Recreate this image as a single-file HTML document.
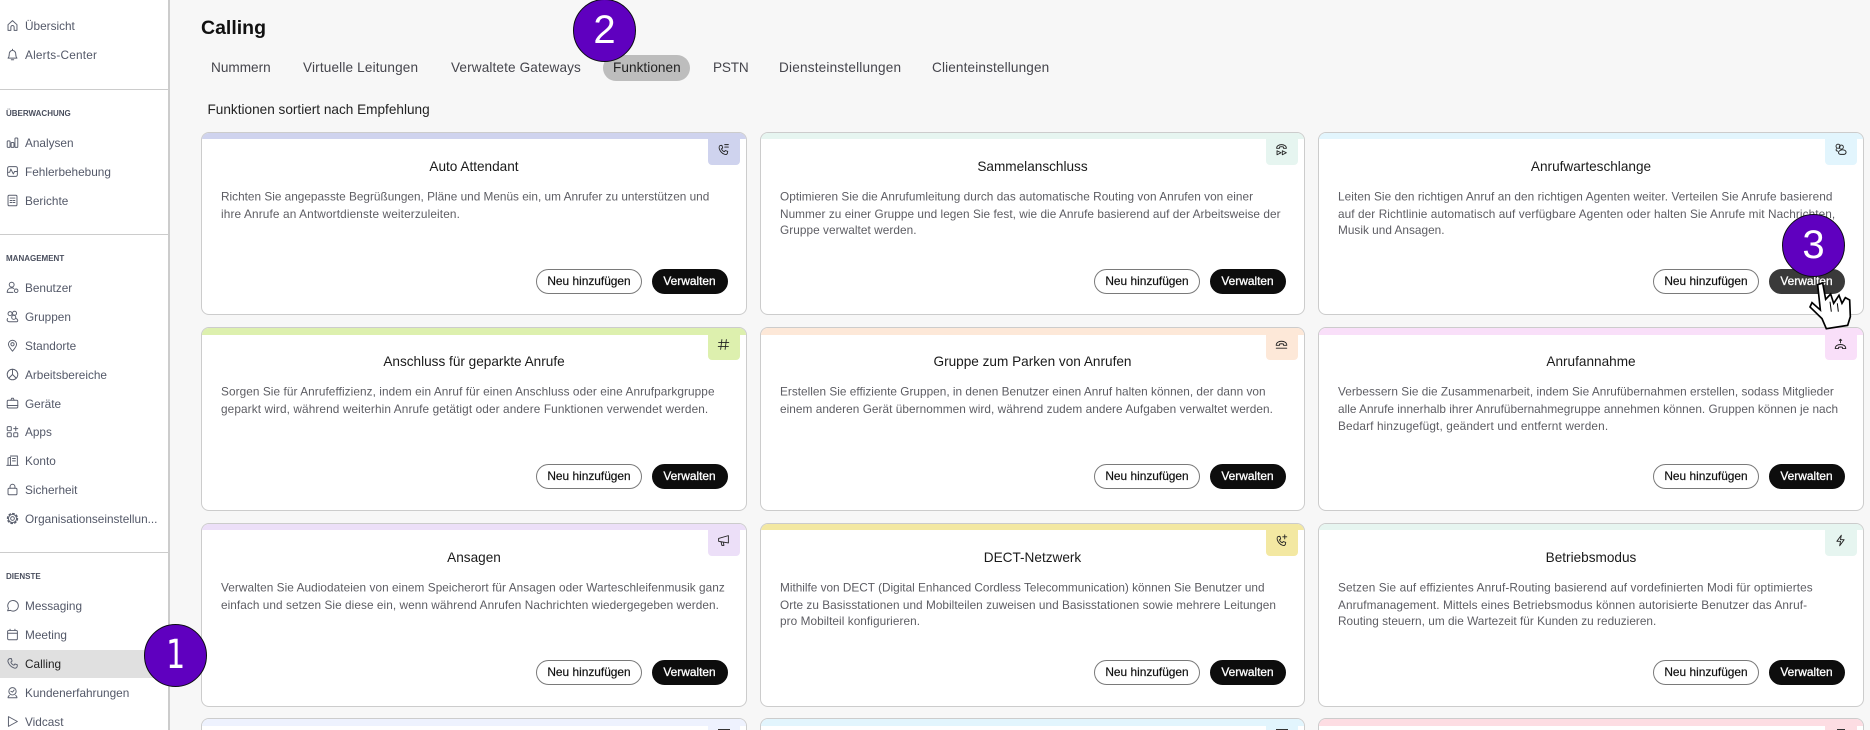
<!DOCTYPE html>
<html lang="de">
<head>
<meta charset="utf-8">
<title>Calling</title>
<style>
html,body{margin:0;padding:0;width:1870px;height:730px;overflow:hidden;background:#f7f7f7;font-family:"Liberation Sans",sans-serif;color:#222}
*{box-sizing:border-box}
#root{position:relative;width:1870px;height:730px;overflow:hidden;background:#f7f7f7}
#side{position:absolute;left:0;top:0;width:170px;height:730px;background:#fff;border-right:2px solid #ccc;overflow:hidden}
.hr{position:absolute;left:0;width:168px;height:1.5px;background:#ccc}
.sec{position:absolute;left:6px;font-size:8px;font-weight:bold;color:#4a4f5e;line-height:10px;height:10px;white-space:nowrap}
.nav{position:absolute;left:0;width:168px;height:28px;line-height:28px;font-size:11.8px;color:#535868;padding-left:25px;white-space:nowrap;overflow:hidden}
.nav svg{position:absolute;left:6px;top:7px;width:13px;height:13px;fill:none;stroke:#5a5f6e;stroke-width:1.2;stroke-linecap:round;stroke-linejoin:round}
.nav.on{background:#e0e0e0;color:#222}
h1{position:absolute;left:201px;top:16px;margin:0;font-size:19.5px;line-height:24px;font-weight:bold;color:#111}
.tab{position:absolute;top:58px;height:20px;line-height:20px;font-size:13.6px;color:#45454c;white-space:nowrap}
#pill{position:absolute;left:603px;top:55px;width:87px;height:26px;border-radius:13px;background:#bdbdbd}
#sort{position:absolute;left:207.5px;top:100px;font-size:13.6px;line-height:20px;color:#222;white-space:nowrap}
.card{position:absolute;background:#fff;border:1.5px solid #ccc;border-radius:8px;overflow:hidden}
.c1{left:201px;width:546px}.c2{left:760px;width:545px}.c3{left:1318px;width:546px}
.r1{top:132px;height:183px}.r2{top:327px;height:184px}.r3{top:523px;height:184px}
.r4{top:718px;height:12px;border-bottom:0;border-radius:8px 8px 0 0}
.band{position:absolute;left:0;top:0;width:100%;height:6px}
.r2 .band,.r4 .band{height:6.5px}
.itab{position:absolute;right:6.5px;top:0;width:32px;height:31.5px;border-radius:0 0 4px 4px}
.r4 .itab{height:10.5px;border-radius:0}
.itab svg{position:absolute;left:9.5px;top:10px;width:13px;height:13px;fill:none;stroke:#222;stroke-width:1.1;stroke-linecap:round;stroke-linejoin:round}
.t{position:absolute;left:0;right:0;top:23.5px;height:20px;line-height:20px;text-align:center;font-size:13.6px;color:#1a1a1a;white-space:nowrap}
svg.d{position:absolute;left:19px;top:54.5px;width:520px;height:56px;overflow:visible;font-family:"Liberation Sans",sans-serif;font-size:11.8px;fill:#5d5d63}
.b1,.b2{position:absolute;top:135.5px;height:25.5px;line-height:23.5px;border-radius:13px;font-size:11.9px;text-align:center;white-space:nowrap}
.b1{right:104px;width:106px;background:#fff;border:1px solid #7a7a7a;color:#111;-webkit-text-stroke:.2px #111}
.b2{right:18.5px;width:76px;background:#0d0d0d;border:1px solid #0d0d0d;color:#fff;-webkit-text-stroke:.3px #fff}
.num{position:absolute;width:63px;height:63px;border-radius:50%;background:#5f00bf;border:1.5px solid #0c0c14;color:#fff;font-size:40px;line-height:60px;text-align:center;font-family:"Liberation Sans",sans-serif}
.num span{display:inline-block}
.num .one{font-family:"DejaVu Sans",sans-serif;transform:scaleX(.75)}
#hand{position:absolute;left:1770px;top:210px;width:100px;height:130px}
</style>
</head>
<body>
<div id="root">
<div id="side">
  <div class="nav" style="top:12px"><svg viewBox="0 0 16 16"><path d="M2.5 7 8 2l5.5 5v7H10v-4a2 2 0 0 0-4 0v4H2.5z"/></svg>Übersicht</div>
  <div class="nav" style="top:41px;letter-spacing:.2px"><svg viewBox="0 0 16 16"><path d="M2.5 12.5h11c-1.300-1.500-1.500-3-1.500-5 0-2.500-1.700-4.500-4-4.500s-4 2-4 4.500c0 2-.2 3.500-1.500 5zM8 1.500V3M6.500 14.500h3"/></svg>Alerts-Center</div>
  <div class="hr" style="top:88.5px"></div>
  <div class="sec" style="top:109px">ÜBERWACHUNG</div>
  <div class="nav" style="top:129px"><svg viewBox="0 0 16 16"><rect x="1.500" y="6" width="3.500" height="8" rx="1"/><rect x="6.300" y="8" width="3.500" height="6" rx="1"/><rect x="11" y="2.500" width="3.500" height="11.500" rx="1"/></svg>Analysen</div>
  <div class="nav" style="top:158px"><svg viewBox="0 0 16 16"><rect x="2" y="2" width="12" height="12" rx="2"/><path d="M2 9h2.500L6 5l3 6 1.500-3H14"/></svg>Fehlerbehebung</div>
  <div class="nav" style="top:187px"><svg viewBox="0 0 16 16"><rect x="2.500" y="1.500" width="11" height="13" rx="1.500"/><path d="M5 8h2.500M9 8h2M5 10.500h2.500M9 10.500h2M5 5h6"/></svg>Berichte</div>
  <div class="hr" style="top:233.5px"></div>
  <div class="sec" style="top:254px">MANAGEMENT</div>
  <div class="nav" style="top:274px"><svg viewBox="0 0 16 16"><circle cx="7" cy="4.500" r="3"/><path d="M1.500 14c0-3.500 2.300-5.500 5.500-5.500 1 0 2 .2 2.700.7M1.500 14h7"/><circle cx="12.500" cy="12" r="2.200"/></svg>Benutzer</div>
  <div class="nav" style="top:303px"><svg viewBox="0 0 16 16"><circle cx="5" cy="4.500" r="2.500"/><circle cx="10.500" cy="4" r="2.500"/><circle cx="9.500" cy="9" r="2.500"/><path d="M2 10.500c-1.500 2 0 4 2 4h9c2 0 2-3-.5-4"/></svg>Gruppen</div>
  <div class="nav" style="top:332px"><svg viewBox="0 0 16 16"><path d="M8 15C5 11.500 3 9 3 6.500a5 5 0 0 1 10 0C13 9 11 11.500 8 15z"/><circle cx="8" cy="6.500" r="2"/></svg>Standorte</div>
  <div class="nav" style="top:361px"><svg viewBox="0 0 16 16"><circle cx="8" cy="8" r="6.500"/><path d="M8 1.500V8l-4.500 4.500M8 8l4.500 4.500"/></svg>Arbeitsbereiche</div>
  <div class="nav" style="top:390px"><svg viewBox="0 0 16 16"><rect x="1.500" y="4" width="13" height="9.500" rx="1.500"/><path d="M1.500 10.500h13M6 4l1-2.500h2L10 4"/></svg>Geräte</div>
  <div class="nav" style="top:418px"><svg viewBox="0 0 16 16"><rect x="1.500" y="2" width="5" height="5" rx="1"/><rect x="1.500" y="9.500" width="5" height="5" rx="1"/><rect x="9.500" y="9.500" width="5" height="5" rx="1"/><path d="M12 2v5M9.500 4.500h5"/></svg>Apps</div>
  <div class="nav" style="top:447px"><svg viewBox="0 0 16 16"><path d="M1 14h14M2.500 14V5l3-1v10M5.500 2.500H14V14M8 5.500h3.500M8 8.500h3.500"/></svg>Konto</div>
  <div class="nav" style="top:476px"><svg viewBox="0 0 16 16"><rect x="2.500" y="6.500" width="11" height="8" rx="1.500"/><path d="M5 6.500v-2a3 3 0 0 1 6 0v2"/></svg>Sicherheit</div>
  <div class="nav" style="top:505px"><svg viewBox="0 0 16 16"><circle cx="8" cy="8" r="2.300"/><circle cx="8" cy="8" r="5"/><circle cx="8" cy="8" r="6.200" stroke-dasharray="2 2.870" stroke-width="1.600"/></svg>Organisationseinstellun...</div>
  <div class="hr" style="top:551.5px"></div>
  <div class="sec" style="top:572px">DIENSTE</div>
  <div class="nav" style="top:592px"><svg viewBox="0 0 16 16"><path d="M2 14.500l1-3A6.500 6.500 0 1 1 5.500 14z"/></svg>Messaging</div>
  <div class="nav" style="top:621px"><svg viewBox="0 0 16 16"><rect x="2" y="3" width="12" height="11.500" rx="1.500"/><path d="M2 6.500h12M5 1.500V3M11 1.500V3"/></svg>Meeting</div>
  <div class="nav on" style="top:650px"><svg viewBox="0 0 16 16"><path d="M4.500 2l2-.2 1 3.200L6 6.300c.6 1.800 2 3.200 3.800 3.800L11 8.600l3 1-.3 2.200c-.3 1.500-2 2.300-3.500 1.800C6.500 12.400 3.700 9.600 2.500 6c-.5-1.600.4-3.600 2-4z"/></svg>Calling</div>
  <div class="nav" style="top:679px"><svg viewBox="0 0 16 16"><circle cx="8" cy="6.500" r="4.500"/><path d="M2.500 14.500h11M4 11.500c-1 1-1.500 2-1.500 3M12 11.500c1 1 1.500 2 1.500 3M6 6.500l2 1 2-2.500"/></svg>Kundenerfahrungen</div>
  <div class="nav" style="top:708px;height:22px"><svg viewBox="0 0 16 16"><path d="M3 2v12l11-6z"/></svg>Vidcast</div>
</div>

<h1>Calling</h1>
<div id="pill"></div>
<div class="tab" style="left:211px">Nummern</div>
<div class="tab" style="left:303px;letter-spacing:.15px">Virtuelle Leitungen</div>
<div class="tab" style="left:451px;letter-spacing:.12px">Verwaltete Gateways</div>
<div class="tab" style="left:613px;color:#222;letter-spacing:.05px">Funktionen</div>
<div class="tab" style="left:713px;letter-spacing:-.2px">PSTN</div>
<div class="tab" style="left:779px;letter-spacing:.19px">Diensteinstellungen</div>
<div class="tab" style="left:932px;letter-spacing:.13px">Clienteinstellungen</div>
<div id="sort">Funktionen sortiert nach Empfehlung</div>

<!-- Row 1 -->
<div class="card c1 r1"><div class="band" style="background:#cfd3ee"></div>
  <div class="itab" style="background:#cfd3ee"><svg viewBox="0 0 16 16"><path d="M4 3l2-.2L7 6 5.500 7.200c.6 1.700 1.800 2.900 3.500 3.500l1.200-1.400 3 1-.3 2c-.3 1.500-1.800 2.200-3.300 1.700C6.300 13 4 10.600 2.800 7 2.300 5.300 2.800 3.500 4 3zM9.500 2H14M9.500 5H14"/></svg></div>
  <div class="t">Auto Attendant</div>
  <svg class="d"><text y="12.500" textLength="488.300">Richten Sie angepasste Begrüßungen, Pläne und Menüs ein, um Anrufer zu unterstützen und</text><text y="30" textLength="238.900">ihre Anrufe an Antwortdienste weiterzuleiten.</text></svg>
  <div class="b1">Neu hinzufügen</div><div class="b2">Verwalten</div></div>

<div class="card c2 r1"><div class="band" style="background:#e6f5f0"></div>
  <div class="itab" style="background:#e6f5f0"><svg viewBox="0 0 16 16"><path d="M2 6.500c0-3 3-4.500 6-4.500s6 1.500 6 4.500h-3.500V5C9 4.500 7 4.500 5.500 5v1.500zM2.500 9.500v5l5-2.500zM9 9.500v5l5-2.500z"/></svg></div>
  <div class="t">Sammelanschluss</div>
  <svg class="d"><text y="12.500" textLength="473">Optimieren Sie die Anrufumleitung durch das automatische Routing von Anrufen von einer</text><text y="30" textLength="500.500">Nummer zu einer Gruppe und legen Sie fest, wie die Anrufe basierend auf der Arbeitsweise der</text><text y="46" textLength="136.500">Gruppe verwaltet werden.</text></svg>
  <div class="b1">Neu hinzufügen</div><div class="b2">Verwalten</div></div>

<div class="card c3 r1"><div class="band" style="background:#e2f5fd"></div>
  <div class="itab" style="background:#e2f5fd"><svg viewBox="0 0 16 16"><circle cx="5" cy="4" r="2.500"/><circle cx="9" cy="5" r="2.500"/><path d="M3 7c-1 2 0 3 1.500 3M7 9.500c-2 1-2 4.500 1 4.500h4c3 0 3.500-3 2-4.500-1.500-1.500-5.500-1.500-7 0z"/></svg></div>
  <div class="t">Anrufwarteschlange</div>
  <svg class="d"><text y="12.500" textLength="494.400">Leiten Sie den richtigen Anruf an den richtigen Agenten weiter. Verteilen Sie Anrufe basierend</text><text y="30" textLength="497.200">auf der Richtlinie automatisch auf verfügbare Agenten oder halten Sie Anrufe mit Nachrichten,</text><text y="46" textLength="106.500">Musik und Ansagen.</text></svg>
  <div class="b1">Neu hinzufügen</div><div class="b2" style="background:#3a3a3a;border-color:#3a3a3a">Verwalten</div></div>

<!-- Row 2 -->
<div class="card c1 r2"><div class="band" style="background:#ddf0ae"></div>
  <div class="itab" style="background:#ddf0ae"><svg viewBox="0 0 16 16"><path d="M6 2 4.500 14M11.500 2 10 14M2 5.500h12.500M1.500 10.500H14"/></svg></div>
  <div class="t">Anschluss für geparkte Anrufe</div>
  <svg class="d"><text y="12.500" textLength="493.500">Sorgen Sie für Anrufeffizienz, indem ein Anruf für einen Anschluss oder eine Anrufparkgruppe</text><text y="30" textLength="487.200">geparkt wird, während weiterhin Anrufe getätigt oder andere Funktionen verwendet werden.</text></svg>
  <div class="b1">Neu hinzufügen</div><div class="b2">Verwalten</div></div>

<div class="card c2 r2"><div class="band" style="background:#fde8d8"></div>
  <div class="itab" style="background:#fde8d8"><svg viewBox="0 0 16 16"><path d="M1.500 9c0-3.500 3-5 6.500-5s6.500 1.500 6.500 5h-4V7.500c-1.500-.5-3.500-.5-5 0V9zM1.500 12.500h13"/></svg></div>
  <div class="t">Gruppe zum Parken von Anrufen</div>
  <svg class="d"><text y="12.500" textLength="485.500">Erstellen Sie effiziente Gruppen, in denen Benutzer einen Anruf halten können, der dann von</text><text y="30" textLength="492.900">einem anderen Gerät übernommen wird, während zudem andere Aufgaben verwaltet werden.</text></svg>
  <div class="b1">Neu hinzufügen</div><div class="b2">Verwalten</div></div>

<div class="card c3 r2"><div class="band" style="background:#f9dff9"></div>
  <div class="itab" style="background:#f9dff9"><svg viewBox="0 0 16 16"><path d="M1.500 13c0-3.500 3-5 6.500-5s6.500 1.500 6.500 5h-4v-1.500c-1.500-.5-3.500-.5-5 0V13zM8 6V2M6.500 3 8 1.500 9.500 3"/></svg></div>
  <div class="t">Anrufannahme</div>
  <svg class="d"><text y="12.500" textLength="495.800">Verbessern Sie die Zusammenarbeit, indem Sie Anrufübernahmen erstellen, sodass Mitglieder</text><text y="30" textLength="500.100">alle Anrufe innerhalb ihrer Anrufübernahmegruppe annehmen können. Gruppen können je nach</text><text y="47" textLength="270.100">Bedarf hinzugefügt, geändert und entfernt werden.</text></svg>
  <div class="b1">Neu hinzufügen</div><div class="b2">Verwalten</div></div>

<!-- Row 3 -->
<div class="card c1 r3"><div class="band" style="background:#ecdff8"></div>
  <div class="itab" style="background:#ecdff8"><svg viewBox="0 0 16 16"><path d="M14 2v9L2 9V5.500zM5 10l1 4h2.500L8 10.500"/></svg></div>
  <div class="t">Ansagen</div>
  <svg class="d"><text y="12.500" textLength="503.800">Verwalten Sie Audiodateien von einem Speicherort für Ansagen oder Warteschleifenmusik ganz</text><text y="30" textLength="497.900">einfach und setzen Sie diese ein, wenn während Anrufen Nachrichten wiedergegeben werden.</text></svg>
  <div class="b1">Neu hinzufügen</div><div class="b2">Verwalten</div></div>

<div class="card c2 r3"><div class="band" style="background:#f3e8a2"></div>
  <div class="itab" style="background:#f3e8a2"><svg viewBox="0 0 16 16"><path d="M4 3l2-.2L7 6 5.500 7.200c.6 1.700 1.800 2.900 3.500 3.500l1.200-1.400 3 1-.3 2c-.3 1.500-1.800 2.200-3.300 1.700C6.300 13 4 10.600 2.800 7 2.300 5.300 2.800 3.500 4 3zM12 1v5M9.500 3.500h5"/></svg></div>
  <div class="t">DECT-Netzwerk</div>
  <svg class="d"><text y="12.500" textLength="484.500">Mithilfe von DECT (Digital Enhanced Cordless Telecommunication) können Sie Benutzer und</text><text y="30" textLength="495.900">Orte zu Basisstationen und Mobilteilen zuweisen und Basisstationen sowie mehrere Leitungen</text><text y="46" textLength="140">pro Mobilteil konfigurieren.</text></svg>
  <div class="b1">Neu hinzufügen</div><div class="b2">Verwalten</div></div>

<div class="card c3 r3"><div class="band" style="background:#e6f5f0"></div>
  <div class="itab" style="background:#e6f5f0"><svg viewBox="0 0 16 16"><path d="M9 1.500 3.500 9H8l-1 5.500L12.500 7H8z"/></svg></div>
  <div class="t">Betriebsmodus</div>
  <svg class="d"><text y="12.500" textLength="474.700">Setzen Sie auf effizientes Anruf-Routing basierend auf vordefinierten Modi für optimiertes</text><text y="30" textLength="469">Anrufmanagement. Mittels eines Betriebsmodus können autorisierte Benutzer das Anruf-</text><text y="46" textLength="318.300">Routing steuern, um die Wartezeit für Kunden zu reduzieren.</text></svg>
  <div class="b1">Neu hinzufügen</div><div class="b2">Verwalten</div></div>

<!-- Row 4 -->
<div class="card c1 r4"><div class="band" style="background:#eef2fe"></div><div class="itab" style="background:#eef2fe"><div style="position:absolute;left:10px;top:9.5px;width:12px;height:1px;background:#333"></div></div></div>
<div class="card c2 r4"><div class="band" style="background:#e2f5fd"></div><div class="itab" style="background:#e2f5fd"><div style="position:absolute;left:10px;top:9.5px;width:12px;height:1px;background:#333"></div></div></div>
<div class="card c3 r4"><div class="band" style="background:#fddde3"></div><div class="itab" style="background:#fddde3"><div style="position:absolute;left:12px;top:9.5px;width:8px;height:1px;background:#333"></div></div></div>

<!-- Callouts -->
<div class="num" style="left:144px;top:624px"><span class="one">1</span></div>
<div class="num" style="left:573px;top:-1px"><span>2</span></div>
<div class="num" style="left:1782px;top:214px"><span>3</span></div>

<svg id="hand" viewBox="0 0 300 390"><path d="M143 224 158 219 167 268 182 252 191 280 207 256 216 280 226 263 239 270 241 320 233 346 169 356 156 326 120 291 126 278 151 300z" fill="#fff" stroke="#000" stroke-width="5" stroke-linejoin="miter"/><path d="M180 275 184 305M202 280 205 305" stroke="#000" stroke-width="3" fill="none"/></svg>
</div>
</body>
</html>
